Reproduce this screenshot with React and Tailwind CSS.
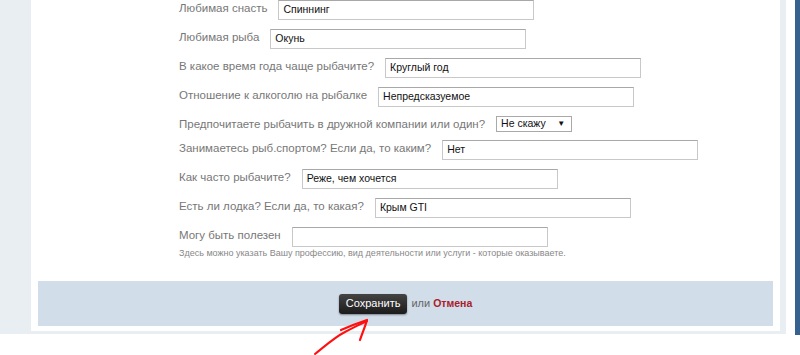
import React from "react";

const rows = [
  { label: "Любимая снасть", value: "Спиннинг" },
  { label: "Любимая рыба", value: "Окунь" },
  { label: "В какое время года чаще рыбачите?", value: "Круглый год" },
  { label: "Отношение к алкоголю на рыбалке", value: "Непредсказуемое" },
  { label: "Предпочитаете рыбачить в дружной компании или один?", select: "Не скажу" },
  { label: "Занимаетесь рыб.спортом? Если да, то каким?", value: "Нет" },
  { label: "Как часто рыбачите?", value: "Реже, чем хочется" },
  { label: "Есть ли лодка? Если да, то какая?", value: "Крым GTI" },
  { label: "Могу быть полезен", value: "" },
];

function Row({ label, value, select }) {
  if (select) {
    return (
      <div className="flex items-start h-[15px]">
        <div className="text-[11.5px] leading-[16px] text-[#777]">{label}</div>
        <div className="ml-[11px] w-[76px] h-[16px] border border-[#a9a9a9] bg-white flex items-center justify-between pl-[4px] pr-[6px] text-[10.5px] text-[#111]">
          <span>{select}</span>
          <span className="text-[8px]">▼</span>
        </div>
      </div>
    );
  }
  return (
    <div className="flex items-start h-[20px]">
      <div className="text-[11.5px] leading-[16px] text-[#777]">{label}</div>
      <div className="ml-[11px] w-[256px] h-[20px] border border-[#c8c8c8] border-t-[#a8a8a8] bg-white flex items-center pl-[4px] text-[10.5px] text-[#111]">
        {value}
      </div>
    </div>
  );
}

export default function App() {
  return (
    <div className="relative w-[800px] h-[355px] bg-white flex font-['Liberation_Sans',Arial,sans-serif]">
      <div className="w-[786px] h-[334px] bg-[#e9eef3] pl-[31px] pr-[6px] pb-[3px] flex">
        <div className="flex-1 bg-white flex flex-col">
          <div className="pl-[148px] flex flex-col gap-[9px]">
            {rows.map((r, i) => (
              <Row key={i} {...r} />
            ))}
          </div>
          <div className="pl-[148px] mt-[1px] text-[9px] leading-[11px] text-[#888]">
            Здесь можно указать Вашу профессию, вид деятельности или услуги - которые оказываете.
          </div>
          <div className="mt-auto mb-[5px] mx-[7px] h-[45px] bg-[#d1dde9] flex items-center justify-center">
            <div className="h-[20px] px-[7px] rounded-[3px] bg-gradient-to-b from-[#444] to-[#1c1c1c] shadow-[0_1px_2px_rgba(0,0,0,0.4)] flex items-center text-[11px] text-white">
              Сохранить
            </div>
            <span className="ml-[4px] text-[11px] text-[#666]">или</span>
            <span className="ml-[3px] text-[10.5px] font-bold text-[#a8202a]">Отмена</span>
          </div>
        </div>
      </div>
      <div className="w-[9px]" />
      <div className="w-[5px] h-[335px] bg-[#37618f]" />
      <svg className="absolute left-[300px] top-[310px]" width="90" height="45" viewBox="0 0 90 45" fill="none">
        <path d="M15 44 C 25 36, 35 27, 45 22 C 53 18, 60 14, 67 11" stroke="#ff1010" strokeWidth="2" strokeLinecap="round" />
        <path d="M41 20 C 50 16, 58 13, 67 10 C 65 17, 62 24, 60 30" stroke="#ff1010" strokeWidth="2.2" strokeLinecap="round" strokeLinejoin="round" />
      </svg>
    </div>
  );
}
